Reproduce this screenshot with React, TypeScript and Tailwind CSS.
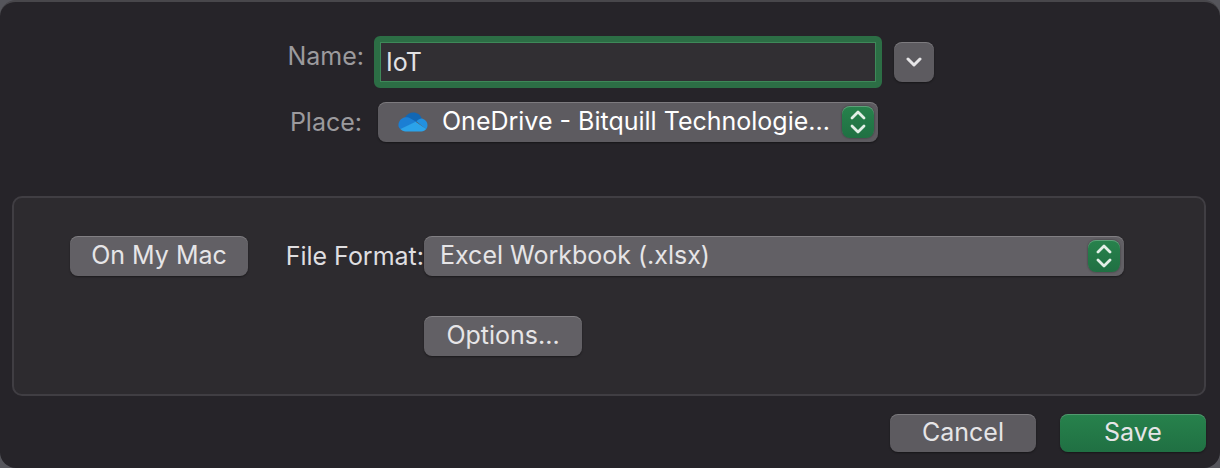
import { useState, type ReactNode, type SelectHTMLAttributes } from "react";

const buttonBase =
  "rounded-lg text-[25px] leading-8 text-[#e6e5e7] shadow-[inset_0_1px_0_rgba(255,255,255,0.2),0_1px_2px_rgba(0,0,0,0.4)]";

function CloudIcon() {
  return (
    <svg viewBox="0 0 30 20" className="h-5 w-[30px]" aria-hidden="true">
      <path d="M7 5.5C9 2 12 .5 15.2.5c4 0 7.300 2.300 8.500 6L16 11Z" fill="#1267b4" />
      <path d="M.5 14C0 9.500 3.200 5.600 7.600 5.200c2-.2 3.600.4 5 1.200l6 3.600L2.600 17.200C1.500 16.500.7 15.400.5 14Z" fill="#1b7fd4" />
      <path d="M18.300 9.300 21 7.200c1.200-.7 2.500-.8 3.600-.5 3 .8 5 3.400 4.900 6.500 0 1.500-.5 2.900-1.400 4Z" fill="#2290de" />
      <path d="m2.400 17 15.200-7.300L28.200 17c-1.100 1.500-2.800 2.400-4.800 2.400H7.600c-2.100 0-4-.8-5.200-2.400Z" fill="#2ba3ea" />
    </svg>
  );
}

function Stepper() {
  return (
    <span className="flex size-8 items-center justify-center rounded-lg bg-linear-to-b from-[#27824c] to-[#207043] shadow-[inset_0_1px_0_rgba(255,255,255,0.25),0_0_2px_rgba(0,0,0,0.5)]">
      <svg viewBox="0 0 32 32" className="size-8" fill="none" stroke="#e2efe7" strokeWidth="2.800" strokeLinecap="round" strokeLinejoin="round" aria-hidden="true">
        <path d="m10 12 6-6 6 6M10 20l6 6 6-6" />
      </svg>
    </span>
  );
}

function PopUp({
  icon,
  className,
  children,
  ...props
}: SelectHTMLAttributes<HTMLSelectElement> & { icon?: ReactNode }) {
  return (
    <div className="relative min-w-0 flex-1">
      <select
        {...props}
        className={`block h-10 w-full appearance-none rounded-lg pr-10 pb-0.5 text-[25px] leading-8 shadow-[inset_0_1px_0_rgba(255,255,255,0.2),0_1px_2px_rgba(0,0,0,0.4)] outline-none ${className}`}
      >
        {children}
      </select>
      {icon && <span className="pointer-events-none absolute inset-y-0 left-5 flex items-center">{icon}</span>}
      <span className="pointer-events-none absolute inset-y-0 right-1 flex items-center">
        <Stepper />
      </span>
    </div>
  );
}

export default function App() {
  const [name, setName] = useState("IoT");

  return (
    <div className="bg-[#55555b] font-['Inter','Liberation_Sans',sans-serif]">
      <form
        onSubmit={(event) => event.preventDefault()}
        className="min-h-screen rounded-2xl border-t-2 border-[#48474b] bg-[#262429] px-3 pb-4 text-[25px] leading-8"
      >
        <div className="mx-auto grid max-w-[648px] grid-cols-[82px_1fr_40px] gap-y-3.5 pt-[34px]">
          <label htmlFor="name" className="self-start pt-1 pr-1 text-right text-[#9b9a9d]">
            Name:
          </label>
          <div className="pr-3 pl-1.5">
            <input
              id="name"
              type="text"
              autoComplete="off"
              value={name}
              onChange={(event) => setName(event.target.value)}
              className="block h-[52px] w-full rounded-md border-6 border-[#2c6e45] bg-[#312f33] px-1.5 text-[#e3e2e4] shadow-[inset_0_0_0_1px_#3e8959] outline-none"
            />
          </div>
          <button
            type="button"
            aria-label="Show more"
            className={`${buttonBase} flex size-10 items-center justify-center self-center bg-[#5d5b60]`}
          >
            <svg viewBox="0 0 16 10" className="h-2.5 w-4" fill="none" stroke="currentColor" strokeWidth="3" strokeLinecap="round" strokeLinejoin="round" aria-hidden="true">
              <path d="m2 2 6 6 6-6" />
            </svg>
          </button>

          <label htmlFor="place" className="self-center pr-1.5 text-right text-[#9b9a9d]">
            Place:
          </label>
          <div className="flex pr-4 pl-2.5">
            <PopUp id="place" icon={<CloudIcon />} className="bg-[#5d5b60] pl-16 text-white">
              <option>OneDrive - Bitquill Technologie...</option>
            </PopUp>
          </div>
        </div>

        <div className="mt-[54px] mr-0.5 rounded-[10px] border-2 border-[#403e43] bg-[#2d2b2f] py-[38px] pr-20 pl-14">
          <div className="grid grid-cols-[178px_176px_1fr] items-center gap-y-10">
            <button type="button" className={`${buttonBase} h-10 bg-[#626065] pb-0.5`}>
              On My Mac
            </button>
            <label htmlFor="format" className="text-right whitespace-nowrap text-[#dfdee0]">
              File Format:
            </label>
            <PopUp id="format" className="bg-[#626065] pl-4 text-[#e6e5e7]">
              <option>Excel Workbook (.xlsx)</option>
            </PopUp>
            <button type="button" className={`${buttonBase} col-start-3 h-10 w-[158px] bg-[#626065] pb-0.5`}>
              Options...
            </button>
          </div>
        </div>

        <div className="mt-[18px] mr-0.5 flex justify-end gap-6">
          <button type="button" className={`${buttonBase} flex h-[38px] w-[146px] items-center justify-center bg-[#5d5b60] pb-0.5`}>
            Cancel
          </button>
          <button type="submit" className={`${buttonBase} flex h-[38px] w-[146px] items-center justify-center bg-linear-to-b from-[#27824c] to-[#207043] pb-0.5`}>
            Save
          </button>
        </div>
      </form>
    </div>
  );
}
